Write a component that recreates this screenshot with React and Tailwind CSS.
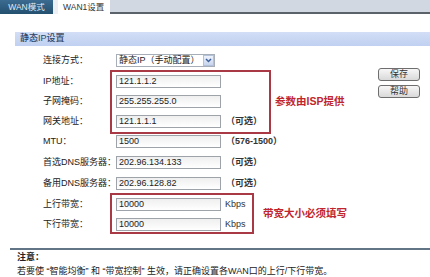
import React from "react";

const FONT = "font-['Liberation_Sans','Noto_Sans_CJK_SC',sans-serif]";

const Field = ({ value }) => (
  <div className="w-[105px] h-[13px] border border-[#9da3a9] bg-linear-to-b from-[#efefef] to-white pl-[2px] text-[9px] leading-[11px] text-[#222] flex items-center">
    {value}
  </div>
);

const Row = ({ label, value, note, className = "" }) => (
  <div className={`flex items-center h-[13px] ${className}`}>
    <span className="w-[73px] text-[9px] text-[#222]">{label}</span>
    <Field value={value} />
    {note && <span className="ml-[5px] text-[9px] font-bold text-[#333]">{note}</span>}
  </div>
);

const Btn = ({ children }) => (
  <div className="w-[42px] h-[13px] rounded-[3px] border border-[#6e6e6e] bg-linear-to-b from-[#f7f7f7] to-[#d9d9d9] text-[9px] text-[#333] flex items-center justify-center">
    {children}
  </div>
);

export default function App() {
  return (
    <div className={`w-[430px] h-[277px] bg-white overflow-hidden ${FONT} text-[#1e1e1e]`}>
      {/* tabs */}
      <div className="flex h-[14px]">
        <div className="w-[53px] h-[14px] bg-linear-to-b from-[#3b6b91] to-[#24506f] text-[#e2ebf3] text-[8.5px] flex items-center justify-center">
          WAN模式
        </div>
        <div className="w-[57px] h-[14px] bg-white border-l-[5px] border-[#eceff3] text-[8.5px] text-[#333] flex items-center pl-[5px]">
          WAN1设置
        </div>
        <div className="flex-1 h-[14px] bg-[#d2d8e1] border-b-2 border-[#5c6269]"></div>
      </div>

      {/* section header */}
      <div className="mt-[18px] ml-[15px] h-[14px] bg-linear-to-b from-[#d3def6] to-[#c0d0f1] text-[9px] font-medium text-[#2d4466] pl-[5px] flex items-center">
        静态IP设置
      </div>

      <div className="flex mt-[8px]">
        <div className="pl-[43px] flex flex-col">
          {/* connection type */}
          <div className="flex items-center h-[13px]">
            <span className="w-[73px] text-[9px] text-[#222]">连接方式：</span>
            <div className="w-[99px] h-[13px] border border-[#a7aeb7] bg-white flex items-center">
              <span className="flex-1 pl-[2px] text-[9px] text-[#222]">静态IP（手动配置）</span>
              <span className="w-[11px] h-[11px] bg-linear-to-b from-[#eef3fb] to-[#c8d5ee] border border-[#b3c1db] flex items-center justify-center">
                <svg width="7" height="5" viewBox="0 0 7 5">
                  <path d="M1 1 L3.5 3.6 L6 1" stroke="#3b5f9a" strokeWidth="1.4" fill="none" />
                </svg>
              </span>
            </div>
          </div>

          {/* ISP group */}
          <div className="flex items-start mt-[3px]">
            <div className="w-[67px] flex flex-col pt-[5px] gap-[7px]">
              <span className="h-[13px] flex items-center text-[9px] text-[#222]">IP地址：</span>
              <span className="h-[13px] flex items-center text-[9px] text-[#222]">子网掩码：</span>
              <span className="h-[13px] flex items-center text-[9px] text-[#222]">网关地址：</span>
            </div>
            <div className="w-[161px] h-[64px] border-2 border-[#a93a45] pl-[4px] pt-[3px] flex flex-col gap-[7px]">
              <div className="flex items-center h-[13px]">
                <Field value="121.1.1.2" />
              </div>
              <div className="flex items-center h-[13px]">
                <Field value="255.255.255.0" />
              </div>
              <div className="flex items-center h-[13px]">
                <Field value="121.1.1.1" />
                <span className="ml-[5px] text-[9px] font-bold text-[#333]">（可选）</span>
              </div>
            </div>
            <span className="self-center ml-[4px] text-[10.5px] font-bold text-[#c0262c]">参数由ISP提供</span>
          </div>

          <Row className="mt-[1px]" label="MTU：" value="1500" note="（576-1500）" />
          <Row className="mt-[8px]" label="首选DNS服务器：" value="202.96.134.133" note="（可选）" />
          <Row className="mt-[8px]" label="备用DNS服务器：" value="202.96.128.82" note="（可选）" />

          {/* bandwidth group */}
          <div className="flex items-start mt-[3px]">
            <div className="w-[67px] flex flex-col pt-[5px] gap-[7px]">
              <span className="h-[13px] flex items-center text-[9px] text-[#222]">上行带宽：</span>
              <span className="h-[13px] flex items-center text-[9px] text-[#222]">下行带宽：</span>
            </div>
            <div className="w-[144px] h-[41px] border-2 border-[#a93a45] pl-[4px] pt-[3px] flex flex-col gap-[7px]">
              <div className="flex items-center h-[13px]">
                <Field value="10000" />
                <span className="ml-[4px] text-[9px] text-[#333]">Kbps</span>
              </div>
              <div className="flex items-center h-[13px]">
                <Field value="10000" />
                <span className="ml-[4px] text-[9px] text-[#333]">Kbps</span>
              </div>
            </div>
            <span className="self-center ml-[9px] text-[10.5px] font-bold text-[#c0262c]">带宽大小必须填写</span>
          </div>
        </div>

        {/* buttons */}
        <div className="ml-auto mr-[10px] pt-[14px] flex flex-col gap-[4px]">
          <Btn>保存</Btn>
          <Btn>帮助</Btn>
        </div>
      </div>

      {/* note */}
      <div className="mt-[14px] ml-[10px] h-[2px] bg-[#627587]"></div>
      <div className="pl-[17px] pt-[1px] text-[9px] text-[#222]">
        <div className="font-bold leading-[12px]">注意：</div>
        <div className="leading-[12px] mt-[2px]">
          若要使 “智能均衡” 和 “带宽控制” 生效，请正确设置各WAN口的上行/下行带宽。
        </div>
      </div>
    </div>
  );
}
